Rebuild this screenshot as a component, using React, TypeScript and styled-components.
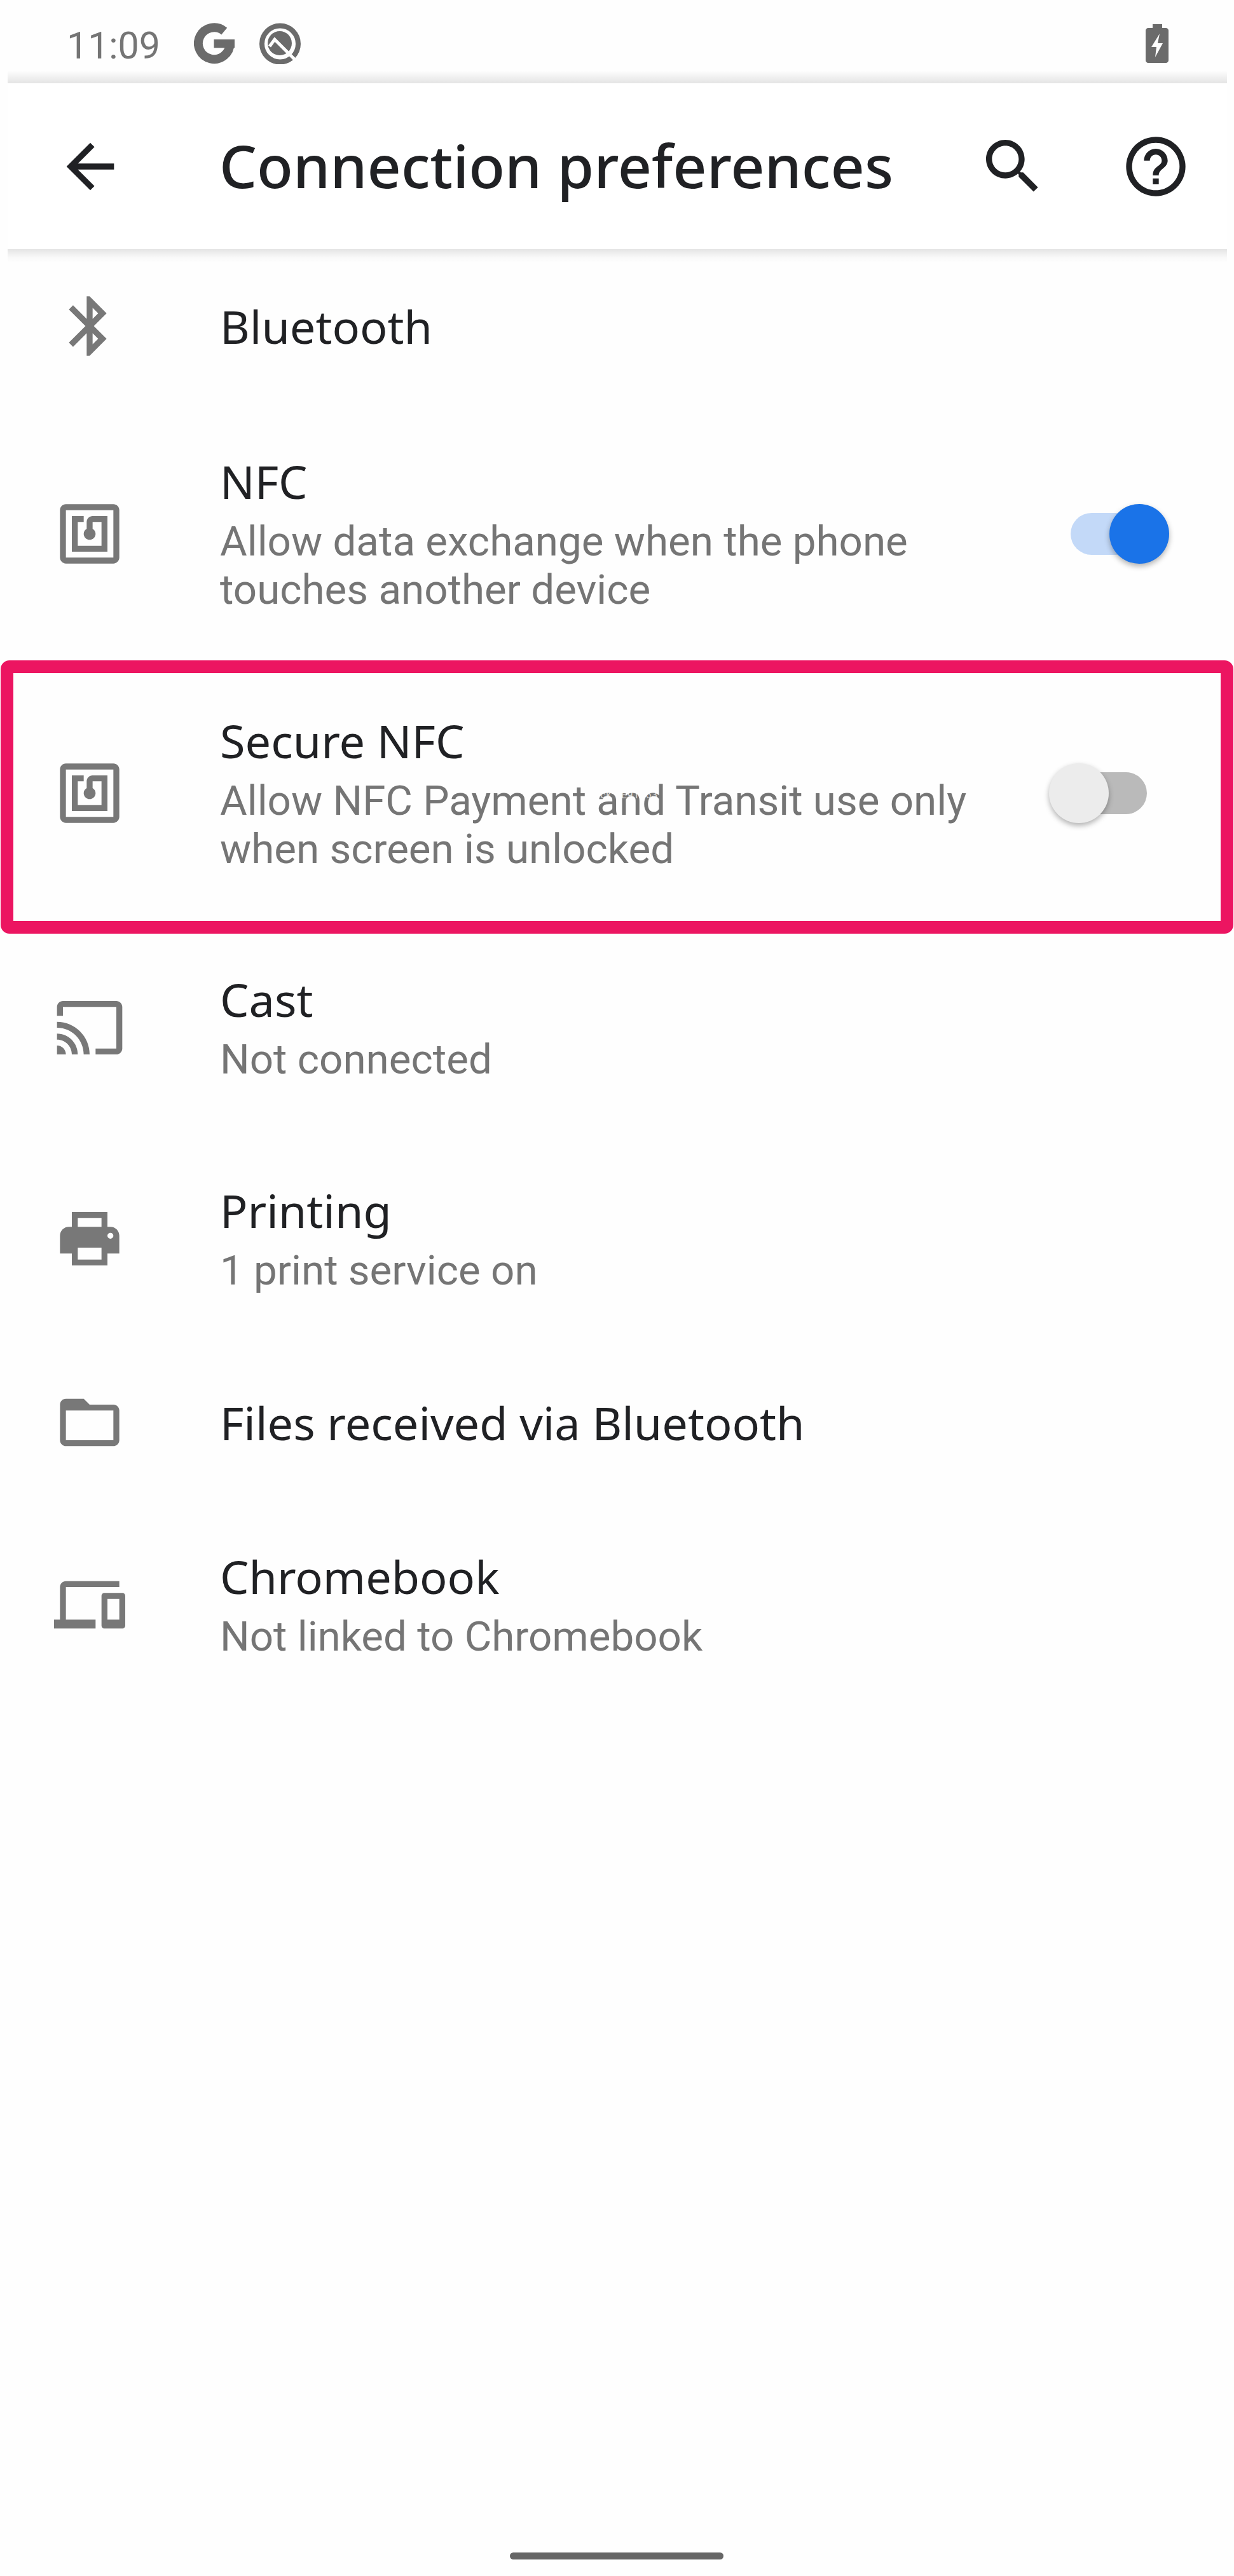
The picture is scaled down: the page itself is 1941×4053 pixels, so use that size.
import React from "react";
import styled, { createGlobalStyle } from "styled-components";

const Global = createGlobalStyle`
  html, body { margin: 0; padding: 0; background: #fefefe; }
  body { font-family: "Roboto", "Liberation Sans", sans-serif; }
`;

const Screen = styled.div`
  width: 1941px;
  height: 4053px;
  background: #fefefe;
  display: flex;
  flex-direction: column;
  position: relative;
  overflow: hidden;
`;

const StatusBar = styled.div`
  height: 131px;
  display: flex;
  align-items: center;
  padding: 5px 103px 0 105px;
  box-sizing: border-box;
`;

const Clock = styled.span`
  width: 200px;
  margin-top: 6px;
  font: 400 59px/1 "Roboto", sans-serif;
  color: #757575;
  flex: none;
`;

const StatusIcon = styled.svg<{ $w: number; $h: number; $gap?: number }>`
  width: ${(p) => p.$w}px;
  height: ${(p) => p.$h}px;
  margin-right: ${(p) => p.$gap ?? 0}px;
  fill: #6b6b6b;
  flex: none;
`;

const StatusSpacer = styled.div`
  flex: 1;
`;

const AppBar = styled.header`
  height: 261px;
  margin: 0 11px 0 12px;
  display: flex;
  align-items: center;
  position: relative;
  background: #fff;
  z-index: 2;
  &::before {
    content: "";
    position: absolute;
    left: 0;
    right: 0;
    top: -20px;
    height: 20px;
    background: linear-gradient(to bottom, rgba(0, 0, 0, 0), rgba(0, 0, 0, 0.1));
  }
  &::after {
    content: "";
    position: absolute;
    left: 0;
    right: 0;
    bottom: -22px;
    height: 22px;
    background: linear-gradient(to bottom, rgba(0, 0, 0, 0.1), rgba(0, 0, 0, 0.02) 60%, rgba(0, 0, 0, 0));
  }
`;

const AppIcon = styled.svg<{ $left: number }>`
  width: 112px;
  height: 112px;
  fill: #202124;
  flex: none;
  margin-left: ${(p) => p.$left}px;
`;

const Title = styled.h1`
  margin: 0 0 0 147px;
  padding-bottom: 3px;
  width: 1192px;
  flex: none;
  font: 500 93px/1 "Noto Sans", "Open Sans", sans-serif;
  color: #202124;
  white-space: nowrap;
`;

const List = styled.main`
  display: flex;
  flex-direction: column;
`;

const Row = styled.section<{ $h: number }>`
  height: ${(p) => p.$h}px;
  display: flex;
  align-items: center;
  position: relative;
`;

const IconSlot = styled.svg`
  width: 112px;
  height: 112px;
  fill: #787878;
  flex: none;
  margin: 0 149px 0 85px;
`;

const Texts = styled.div<{ $lift: boolean }>`
  flex: 1;
  min-width: 0;
  padding-bottom: ${(p) => (p.$lift ? 14 : 0)}px;
`;

const RowTitle = styled.div<{ $tall: boolean }>`
  font: 400 72px/${(p) => (p.$tall ? 113 : 94)}px "Noto Sans", "Open Sans", sans-serif;
  color: #202124;
  white-space: nowrap;
`;

const Summary = styled.div`
  font: 400 65.5px/76px "Roboto", sans-serif;
  color: #757575;
  white-space: pre-line;
`;

const Track = styled.div<{ $on: boolean }>`
  width: 142px;
  height: 66px;
  border-radius: 33px;
  background: ${(p) => (p.$on ? "#c3d9f8" : "#bababa")};
  position: relative;
  flex: none;
  margin-right: ${(p) => (p.$on ? 115 : 137)}px;
`;

const Knob = styled.div<{ $on: boolean }>`
  width: 94px;
  height: 94px;
  border-radius: 50%;
  background: ${(p) => (p.$on ? "#1a73e8" : "#ececec")};
  position: absolute;
  top: -14px;
  ${(p) => (p.$on ? "right: -13px;" : "left: -12px;")}
  box-shadow: 0 4px 8px rgba(0, 0, 0, 0.3);
`;

const Highlight = styled.div`
  position: absolute;
  left: 1px;
  right: 1px;
  top: -7px;
  bottom: -19px;
  border: 20px solid #ec1561;
  border-radius: 14px;
  pointer-events: none;
`;

const PickerLabel = styled.span`
  position: absolute;
  left: 929px;
  top: 196px;
  font: 400 16px/18px "Roboto", sans-serif;
  letter-spacing: 0.6px;
  color: rgba(255, 255, 255, 0.75);
  white-space: nowrap;
`;

const HomeBar = styled.div`
  position: absolute;
  left: 802px;
  bottom: 26px;
  width: 336px;
  height: 11px;
  border-radius: 6px;
  background: #666;
`;

const paths = {
  back: "M20 11H7.83l5.59-5.59L12 4l-8 8 8 8 1.41-1.41L7.83 13H20v-2z",
  search:
    "M15.5 14h-.79l-.28-.27C15.41 12.59 16 11.11 16 9.5 16 5.91 13.09 3 9.5 3S3 5.91 3 9.5 5.91 16 9.5 16c1.61 0 3.09-.59 4.23-1.57l.27.28v.79l5 4.99L20.49 19l-4.99-5zm-6 0C7.01 14 5 11.99 5 9.5S7.01 5 9.5 5 14 7.01 14 9.5 11.99 14 9.5 14z",
  help: "M11 18h2v-2h-2v2zm1-16C6.48 2 2 6.48 2 12s4.48 10 10 10 10-4.48 10-10S17.52 2 12 2zm0 18c-4.41 0-8-3.59-8-8s3.59-8 8-8 8 3.59 8 8-3.59 8-8 8zm0-14c-2.21 0-4 1.79-4 4h2c0-1.1.9-2 2-2s2 .9 2 2c0 2-3 1.75-3 5h2c0-2.25 3-2.5 3-5 0-2.21-1.79-4-4-4z",
  bluetooth:
    "M17.71 7.71L12 2h-1v7.59L6.41 5 5 6.41 10.59 12 5 17.59 6.41 19 11 14.41V22h1l5.71-5.71-4.3-4.29 4.3-4.29zM13 5.83l1.88 1.88L13 9.59V5.83zm1.88 10.46L13 18.17v-3.76l1.88 1.88z",
  nfc: "M20 2H4c-1.1 0-2 .9-2 2v16c0 1.1.9 2 2 2h16c1.1 0 2-.9 2-2V4c0-1.1-.9-2-2-2zm0 18H4V4h16v16zM18 6h-5c-1.1 0-2 .9-2 2v2.28c-.6.35-1 .98-1 1.72 0 1.1.9 2 2 2s2-.9 2-2c0-.74-.4-1.38-1-1.72V8h3v8H8V8h2V6H6v12h12V6z",
  cast: "M21 3H3c-1.1 0-2 .9-2 2v3h2V5h18v14h-7v2h7c1.1 0 2-.9 2-2V5c0-1.1-.9-2-2-2zM1 18v3h3c0-1.66-1.34-3-3-3zm0-4v2c2.76 0 5 2.24 5 5h2c0-3.87-3.13-7-7-7zm0-4v2c4.97 0 9 4.03 9 9h2c0-6.08-4.93-11-11-11z",
  print:
    "M19 8H5c-1.66 0-3 1.34-3 3v6h4v4h12v-4h4v-6c0-1.66-1.34-3-3-3zm-3 11H8v-4h8v4zm3-7c-.55 0-1-.45-1-1s.45-1 1-1 1 .45 1 1-.45 1-1 1zM6 3h12v5h-2V5H8v3H6z",
  folder:
    "M20 6h-8l-2-2H4c-1.1 0-1.99.9-1.99 2L2 18c0 1.1.9 2 2 2h16c1.1 0 2-.9 2-2V8c0-1.1-.9-2-2-2zm0 12H4V8h16v10z",
  devices:
    "M4 6h18V4H4c-1.1 0-2 .9-2 2v11H0v3h14v-3H4V6zm19 2h-6c-.55 0-1 .45-1 1v10c0 .55.45 1 1 1h6c.55 0 1-.45 1-1V9c0-.55-.45-1-1-1zm-1 9h-4v-7h4v7z",
};

type RowData = {
  h: number;
  icon: keyof typeof paths;
  title: string;
  summary?: string;
  toggle?: boolean;
  highlight?: boolean;
};

const rows: RowData[] = [
  { h: 242, icon: "bluetooth", title: "Bluetooth" },
  {
    h: 412,
    icon: "nfc",
    title: "NFC",
    summary: "Allow data exchange when the phone\ntouches another device",
    toggle: true,
  },
  {
    h: 404,
    icon: "nfc",
    title: "Secure NFC",
    summary: "Allow NFC Payment and Transit use only\nwhen screen is unlocked",
    toggle: false,
    highlight: true,
  },
  { h: 334, icon: "cast", title: "Cast", summary: "Not connected" },
  { h: 330, icon: "print", title: "Printing", summary: "1 print service on" },
  { h: 248, icon: "folder", title: "Files received via Bluetooth" },
  { h: 326, icon: "devices", title: "Chromebook", summary: "Not linked to Chromebook" },
];

export default function App() {
  return (
    <Screen>
      <Global />
      <StatusBar>
        <Clock>11:09</Clock>
        <StatusIcon $w={64} $h={65} $gap={39} viewBox="0 0 193 195">
          <path d="M144 39A75 75 0 1 0 171 96" fill="none" stroke="#6b6b6b" strokeWidth="42" />
          <rect x="95" y="78" width="98" height="40" />
        </StatusIcon>
        <StatusIcon $w={65} $h={65} viewBox="0 0 65 65">
          <circle cx="32.5" cy="33" r="28.5" fill="none" stroke="#6b6b6b" strokeWidth="8" />
          <circle cx="32" cy="32" r="19" />
          <path d="M16 37L24 26L58 60" fill="none" stroke="#fefefe" strokeWidth="5" />
        </StatusIcon>
        <StatusSpacer />
        <StatusIcon $w={36} $h={61} viewBox="0 0 36 61">
          <path
            fillRule="evenodd"
            d="M11 0h15v6h6c2 0 4 2 4 4v47c0 2-2 4-4 4H4c-2 0-4-2-4-4V10c0-2 2-4 4-4h7zM22 15L9 36h8l-2 16 12-22h-8z"
          />
        </StatusIcon>
      </StatusBar>
      <AppBar>
        <AppIcon $left={74} viewBox="0 0 24 24">
          <path d={paths.back} />
        </AppIcon>
        <Title>Connection preferences</Title>
        <AppIcon $left={0} viewBox="0 0 24 24">
          <path d={paths.search} />
        </AppIcon>
        <AppIcon $left={113} viewBox="0 0 24 24">
          <path d={paths.help} />
        </AppIcon>
      </AppBar>
      <List>
        {rows.map((r) => (
          <Row key={r.title} $h={r.h}>
            <IconSlot viewBox="0 0 24 24">
              <path d={paths[r.icon]} />
            </IconSlot>
            <Texts $lift={!!r.summary}>
              <RowTitle $tall={!!r.summary}>{r.title}</RowTitle>
              {r.summary && <Summary>{r.summary}</Summary>}
            </Texts>
            {r.toggle !== undefined && (
              <Track $on={r.toggle}>
                <Knob $on={r.toggle} />
              </Track>
            )}
            {r.highlight && (
              <>
                <Highlight />
                <PickerLabel>Pick #E91E63</PickerLabel>
              </>
            )}
          </Row>
        ))}
      </List>
      <HomeBar />
    </Screen>
  );
}
